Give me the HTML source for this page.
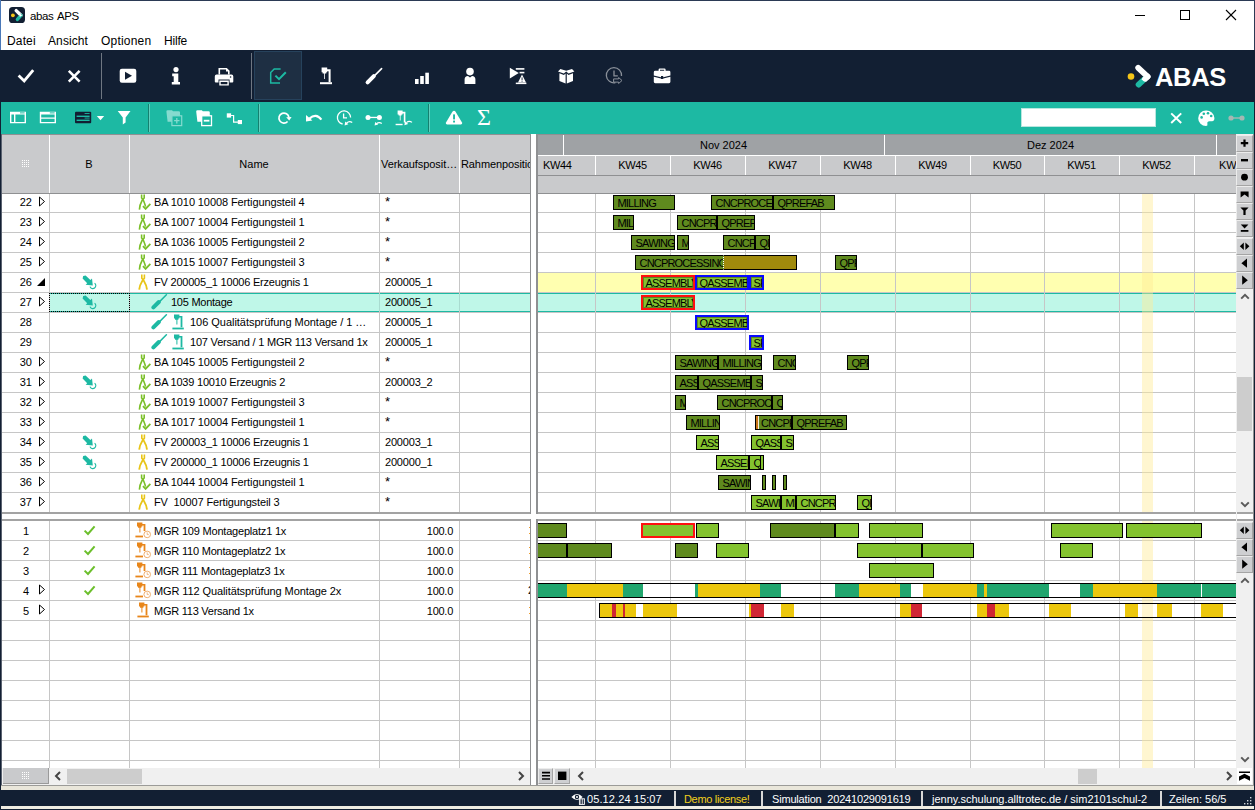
<!DOCTYPE html>
<html lang="de"><head><meta charset="utf-8"><title>abas APS</title>
<style>
html,body{margin:0;padding:0;}
body{width:1255px;height:810px;overflow:hidden;background:#fff;font-family:"Liberation Sans", sans-serif;font-size:11px;color:#000;position:relative;}
div,span,svg{position:absolute;box-sizing:border-box;}
.t{white-space:nowrap;line-height:14px;height:14px;font-size:11px;}
.bar{border:1px solid #000;overflow:hidden;white-space:nowrap;font-size:11px;line-height:14px;padding-left:3px;height:15px;color:#000;letter-spacing:-0.8px;}
.hl{height:1px;background:#c6c6c6;}
.vl{width:1px;background:#c6c6c6;}
.btn{width:17px;height:17px;background:#cecfd1;border-top:1px solid #ececec;border-left:1px solid #ececec;border-right:1px solid #a4a4a4;border-bottom:1px solid #a4a4a4;}

</style></head><body>
<div class="t" style="left:30px;top:8px;font-size:11.5px;letter-spacing:-0.4px;word-spacing:1.5px;line-height:16px;height:16px;">abas APS</div>
<svg style="left:9px;top:7px;" width="16" height="16" viewBox="0 0 16 16"><rect x="0" y="0" width="16" height="16" rx="3.6" fill="#121f33"/><circle cx="3.9" cy="8.3" r="1.9" fill="#f5c518"/><path d="M7.2 3.6 L12 8.3" stroke="#fff" stroke-width="3.4" stroke-linecap="round" fill="none"/><path d="M12 8.3 L8.4 12.4" stroke="#1db9a3" stroke-width="3.4" stroke-linecap="round" fill="none"/><path d="M9.6 5.9 L13.4 8.3 L10.8 10 Z" fill="#fff"/></svg>
<svg style="left:1130px;top:5px;" width="120" height="22" viewBox="0 0 120 22"><g stroke="#000" stroke-width="1" fill="none" shape-rendering="crispEdges"><line x1="5" y1="10.5" x2="15" y2="10.5"/><rect x="50.5" y="5.5" width="9" height="9"/></g><g stroke="#000" stroke-width="1.1" fill="none"><line x1="96" y1="5" x2="106" y2="15"/><line x1="106" y1="5" x2="96" y2="15"/></g></svg>
<div class="t" style="left:7px;top:33px;font-size:12px;line-height:16px;height:16px;letter-spacing:0.15px;">Datei</div>
<div class="t" style="left:48px;top:33px;font-size:12px;line-height:16px;height:16px;letter-spacing:0.1px;">Ansicht</div>
<div class="t" style="left:101px;top:33px;font-size:12px;line-height:16px;height:16px;letter-spacing:0.2px;">Optionen</div>
<div class="t" style="left:164px;top:33px;font-size:12px;line-height:16px;height:16px;letter-spacing:-0.2px;">Hilfe</div>
<div style="left:0px;top:50px;width:1255px;height:52px;background:#121f33;"></div>
<div style="left:0px;top:102px;width:1255px;height:32px;background:#1db9a3;"></div>
<svg style="left:0;top:50px" width="1255" height="51" viewBox="0 50 1255 51"><path d="M18.6 75.6 L24.2 81 L33.2 70.2" fill="none" stroke="#fff" stroke-width="2.8" stroke-linecap="butt" stroke-linejoin="miter"/><path d="M68.8 70.8 L79.6 81.6 M79.6 70.8 L68.8 81.6" fill="none" stroke="#fff" stroke-width="2.6"/><rect x="101" y="53" width="1" height="46" fill="#6f7782"/><rect x="119.7" y="68.8" width="16.6" height="14" rx="2.2" fill="#fff"/><path d="M125 71.8 L132 75.8 L125 79.8 Z" fill="#121f33"/><circle cx="176" cy="69.6" r="2.6" fill="#fff"/><path d="M172.2 73.6 H178.3 V82 H180 V84.6 H171.8 V82 H173.7 V76.2 H172.2 Z" fill="#fff"/><path d="M218.5 74.5 V68 H226.8 L229.6 70.8 V74.5 H228 V71.6 H226 V69.6 H220.1 V74.5 Z" fill="#fff"/><path d="M216.6 74.6 H231.5 Q233.3 74.6 233.3 76.4 V81.4 Q233.3 82.4 232.3 82.4 H229.6 V79.6 H218.5 V82.4 H215.8 Q214.8 82.4 214.8 81.4 V76.4 Q214.8 74.6 216.6 74.6 Z" fill="#fff"/><path d="M219.3 80.6 H228.8 V85.6 H219.3 Z M220.7 82 V84.2 H227.4 V82 Z" fill="#fff" fill-rule="evenodd"/><circle cx="230.6" cy="77" r="0.8" fill="#121f33"/><rect x="251" y="53" width="1" height="46" fill="#6f7782"/><rect x="254.5" y="51.5" width="47" height="48" fill="#1e2f43" stroke="#26425c" stroke-width="1"/><path d="M280.6 68.9 H274.2 L270.7 72.6 V83 H280" fill="none" stroke="#1db9a3" stroke-width="1.5"/><path d="M275.4 75.6 L279 79.2 L285.8 72.2" fill="none" stroke="#1db9a3" stroke-width="2"/><path d="M321.6 67.6 H327.2 V69.2 H330.6 V82 H328.6 V71.2 H327.2 V72.2 H326.3 V73.6 H325 V79 H324.2 V73.6 H322.6 V72.2 H321.6 Z" fill="#fff"/><rect x="320" y="82.2" width="12" height="2" fill="#fff"/><path d="M381.6 68.6 L373.6 76.6" stroke="#fff" stroke-width="1.6" stroke-linecap="round" fill="none"/><path d="M373.8 76.2 L367.6 82.4" stroke="#fff" stroke-width="4" stroke-linecap="round" fill="none"/><rect x="415" y="79" width="3.6" height="5" fill="#fff"/><rect x="420.2" y="76" width="3.6" height="8" fill="#fff"/><rect x="425.3" y="72.7" width="3.6" height="11.3" fill="#fff"/><circle cx="470" cy="71.6" r="3.8" fill="#fff"/><path d="M464.6 84 V79.6 Q464.6 76.2 468 76 L470 77.6 L472 76 Q475.4 76.2 475.4 79.6 V84 Z" fill="#fff"/><path d="M509.8 67.8 L518.8 73.1 L509.8 78.4 Z" fill="#fff"/><rect x="515.8" y="68.1" width="8.6" height="1.6" fill="#fff"/><rect x="519.6" y="71.8" width="4.8" height="1.6" fill="#fff"/><path d="M522 74.6 L526 82.6 H518 Z" fill="#fff"/><rect x="515.8" y="82.6" width="10.6" height="1.5" fill="#fff"/><rect x="521.6" y="77.4" width="0.9" height="2.8" fill="#121f33"/><rect x="521.6" y="80.8" width="0.9" height="0.9" fill="#121f33"/><path d="M558 71.4 L560.4 69 L566.2 70.8 L572 69 L574.4 71.4 L568.6 73.6 L566.2 71.6 L563.8 73.6 Z" fill="#fff"/><path d="M559.4 73.2 L563.9 74.9 L565.6 73.4 V83.4 L559.4 81 Z" fill="#fff"/><path d="M573 73.2 L568.5 74.9 L566.8 73.4 V83.4 L573 81 Z" fill="#fff"/><path d="M615.4 82.7 A7.6 7.6 0 1 1 621.5 76" fill="none" stroke="#8a9099" stroke-width="1.3"/><path d="M614 70.6 V75.8 H617.8" fill="none" stroke="#8a9099" stroke-width="1.3"/><path d="M613.6 78.9 H618.6 V77.5 L622 80.5 L618.6 83.5 V82.1 H613.6 Z" fill="none" stroke="#8a9099" stroke-width="1"/><path d="M658.6 71 V69.6 Q658.6 68.4 659.8 68.4 H664.4 Q665.6 68.4 665.6 69.6 V71 H664.2 V69.8 H660 V71 Z" fill="#fff"/><path d="M655.2 70.8 H669 Q670.4 70.8 670.4 72.2 V75.6 L663.2 77.2 V76 H661 V77.2 L653.8 75.6 V72.2 Q653.8 70.8 655.2 70.8 Z" fill="#fff"/><path d="M653.8 76.8 L661 78.4 V79 H663.2 V78.4 L670.4 76.8 V81.8 Q670.4 83.2 669 83.2 H655.2 Q653.8 83.2 653.8 81.8 Z" fill="#fff"/><circle cx="1131" cy="76.5" r="3.3" fill="#f5c518"/><path d="M1138.2 67.8 L1147.6 76.6" fill="none" stroke="#fff" stroke-width="5.8" stroke-linecap="round"/><path d="M1138.6 84.6 L1144.2 79.4" fill="none" stroke="#1db9a3" stroke-width="5.8" stroke-linecap="round"/><path d="M1147.6 76.6 L1145.2 78.8" fill="none" stroke="#fff" stroke-width="5.8" stroke-linecap="round"/><path d="M1144.6 75.2 L1149.8 76.4 L1146.6 80.6 L1141.4 80 Z" fill="#fff"/></svg>
<div class="t" style="left:1155px;top:63px;font-size:25.5px;font-weight:bold;color:#fff;line-height:28px;height:28px;letter-spacing:-0.3px;">ABAS</div>
<svg style="left:0;top:101px" width="1255" height="33" viewBox="0 101 1255 33"><path d="M10 111.7 H26 V123.3 H10 Z M11.4 114.4 V121.9 H14 V114.4 Z M15.4 114.4 V121.9 H24.6 V114.4 Z" fill="#fff" fill-rule="evenodd"/><rect x="20" y="112.4" width="4.6" height="1" fill="#1db9a3"/><path d="M39.8 111.7 H56 V123.3 H39.8 Z M41.2 114.4 V117.4 H54.6 V114.4 Z M41.2 118.8 V121.9 H54.6 V118.8 Z" fill="#fff" fill-rule="evenodd"/><rect x="49.8" y="112.4" width="4.8" height="1" fill="#1db9a3"/><rect x="75" y="111.7" width="16.2" height="11.6" rx="1" fill="#121f33"/><rect x="76.6" y="115.6" width="13" height="1.4" fill="#1db9a3"/><rect x="76.6" y="119.6" width="13" height="1.4" fill="#1db9a3"/><rect x="84.6" y="113" width="5" height="0.9" fill="#1db9a3"/><rect x="84.6" y="117.6" width="5" height="0.9" fill="#1db9a3"/><path d="M96.8 116 H104.2 L100.5 120.2 Z" fill="#fff"/><path d="M117.7 111 H130.5 L125.6 117.4 V122.6 L122.8 124.4 V117.4 Z" fill="#fff"/><rect x="148" y="104" width="1" height="28" fill="#15806f"/><rect x="149" y="104" width="1" height="28" fill="#5fd0bf"/><path d="M166.4 111.4 Q166.4 110.2 167.6 110.2 H172 L173 111.3 H178.8 Q180 111.3 180 112.5 V121.8 H167.6 Z" fill="#86dbcf"/><rect x="171.9" y="115.8" width="9.8" height="9.8" fill="#1db9a3" stroke="#86dbcf" stroke-width="1.2"/><path d="M176.8 118 V123.4 M174.1 120.7 H179.5" stroke="#86dbcf" stroke-width="1.3" fill="none"/><path d="M196.2 111.4 Q196.2 110.2 197.4 110.2 H201.8 L202.8 111.3 H208.6 Q209.8 111.3 209.8 112.5 V121.8 H197.4 Z" fill="#fff"/><rect x="201.7" y="115.8" width="9.8" height="9.8" fill="#1db9a3" stroke="#fff" stroke-width="1.3"/><path d="M203.8 120.7 H209.4" stroke="#fff" stroke-width="1.8" fill="none"/><rect x="226.8" y="113.3" width="4.3" height="4.3" fill="#fff"/><rect x="237.8" y="120" width="4.2" height="4.1" fill="#fff"/><path d="M231 115.5 H233.6 V122.2 H238" fill="none" stroke="#fff" stroke-width="1.2"/><rect x="258" y="104" width="1" height="28" fill="#15806f"/><rect x="259" y="104" width="1" height="28" fill="#5fd0bf"/><path d="M287.6 121.5 A5 5 0 1 1 288.9 117.4" fill="none" stroke="#fff" stroke-width="1.7"/><path d="M286.2 117.3 L291.6 117.1 L289.2 120.5 Z" fill="#fff"/><path d="M309.4 118.6 Q316 112.6 321.4 119.6" fill="none" stroke="#fff" stroke-width="2.1"/><path d="M306 115 V121.4 L312.4 120.6 Z" fill="#fff"/><path d="M342.6 124 A6.6 6.6 0 1 1 350.6 117.6" fill="none" stroke="#fff" stroke-width="1.3"/><path d="M343.6 113.4 V117.8 H347" fill="none" stroke="#fff" stroke-width="1.3"/><path d="M346.6 123 Q349.4 120.4 352.2 122.6" fill="none" stroke="#fff" stroke-width="1.3"/><path d="M344.6 125.4 L345.2 121.4 L348.4 124.2 Z" fill="#fff"/><circle cx="368" cy="117.4" r="2.5" fill="#fff"/><circle cx="379.4" cy="117.4" r="2.5" fill="#fff"/><rect x="368" y="116.8" width="11" height="1.3" fill="#fff"/><path d="M376.4 123.8 Q379 121.6 381.8 123.4" fill="none" stroke="#fff" stroke-width="1.2"/><path d="M374.6 125.6 L375.2 122 L378.2 124.4 Z" fill="#fff"/><path d="M397.6 110.4 H402.6 V111.8 H405.4 V122.4 H403.8 V113.4 H402.6 V114.4 H401.6 V115.4 H400.6 V120.4 H399.8 V115.4 H398.6 V114.4 H397.6 Z" fill="#fff"/><rect x="395.6" y="123.8" width="7" height="1.4" fill="#fff"/><path d="M406.4 122.6 Q409.2 120.2 412 122.4" fill="none" stroke="#fff" stroke-width="1.2"/><path d="M404.4 125.2 L405 121.2 L408.2 124 Z" fill="#fff"/><rect x="428" y="104" width="1" height="28" fill="#15806f"/><rect x="429" y="104" width="1" height="28" fill="#5fd0bf"/><path d="M454 110.8 Q455 110.8 455.6 111.8 L462 122.6 Q462.8 124.4 461 124.4 H447 Q445.2 124.4 446 122.6 L452.4 111.8 Q453 110.8 454 110.8 Z" fill="#fff"/><rect x="453.1" y="114.4" width="1.9" height="5" fill="#1db9a3"/><rect x="453.1" y="120.6" width="1.9" height="1.9" fill="#1db9a3"/><rect x="1021.5" y="108.5" width="134" height="18" fill="#fff" stroke="#b9e6df" stroke-width="1"/><path d="M1171.2 113.4 L1181.2 123 M1181.2 113.4 L1171.2 123" stroke="#fff" stroke-width="2" fill="none"/><path d="M1206 110.4 A7.8 7.8 0 1 0 1206 126 Q1208 126 1207.4 123.8 Q1206.8 121.4 1209.6 121.2 H1212 Q1214.6 121 1214.4 118 A8 8 0 0 0 1206 110.4 Z" fill="#fff"/><circle cx="1201.6" cy="117.4" r="1.3" fill="#1db9a3"/><circle cx="1203.8" cy="113.8" r="1.3" fill="#1db9a3"/><circle cx="1208" cy="113.2" r="1.3" fill="#1db9a3"/><circle cx="1211.2" cy="116" r="1.3" fill="#1db9a3"/><circle cx="1231" cy="118" r="2.6" fill="#a4b8b3"/><circle cx="1242" cy="118" r="2.6" fill="#a4b8b3"/><rect x="1231" y="117.3" width="11" height="1.4" fill="#a4b8b3"/></svg>
<div class="t" style="left:477px;top:104px;font-family:'Liberation Serif',serif;font-size:24px;line-height:26px;height:26px;color:#fff;">&Sigma;</div>
<div style="left:2px;top:134px;width:529px;height:60px;background:#c9cacc;"></div>
<div style="left:2px;top:134px;width:529px;height:1px;background:#8f9092;"></div>
<div style="left:2px;top:193px;width:529px;height:1px;background:#8f9092;"></div>
<div style="left:49px;top:135px;width:1px;height:58px;background:#fff;"></div>
<div style="left:129px;top:135px;width:1px;height:58px;background:#fff;"></div>
<div style="left:379px;top:135px;width:1px;height:58px;background:#fff;"></div>
<div style="left:459px;top:135px;width:1px;height:58px;background:#fff;"></div>
<svg style="left:22px;top:160px;" width="8" height="8" viewBox="0 0 8 8"><rect x="0" y="0" width="1" height="1" fill="#fff"/><rect x="0" y="2" width="1" height="1" fill="#fff"/><rect x="0" y="4" width="1" height="1" fill="#fff"/><rect x="0" y="6" width="1" height="1" fill="#fff"/><rect x="2" y="0" width="1" height="1" fill="#fff"/><rect x="2" y="2" width="1" height="1" fill="#fff"/><rect x="2" y="4" width="1" height="1" fill="#fff"/><rect x="2" y="6" width="1" height="1" fill="#fff"/><rect x="4" y="0" width="1" height="1" fill="#fff"/><rect x="4" y="2" width="1" height="1" fill="#fff"/><rect x="4" y="4" width="1" height="1" fill="#fff"/><rect x="4" y="6" width="1" height="1" fill="#fff"/><rect x="6" y="0" width="1" height="1" fill="#fff"/><rect x="6" y="2" width="1" height="1" fill="#fff"/><rect x="6" y="4" width="1" height="1" fill="#fff"/><rect x="6" y="6" width="1" height="1" fill="#fff"/></svg>
<div class="t" style="left:49px;top:157px;width:80px;text-align:center;">B</div>
<div class="t" style="left:129px;top:157px;width:250px;text-align:center;">Name</div>
<div class="t" style="left:381px;top:157px;letter-spacing:-0.07px;">Verkaufsposit&hellip;</div>
<div style="left:461px;top:157px;width:69px;height:14px;overflow:hidden;"><div class="t" style="left:0;top:0;letter-spacing:-0.1px;">Rahmenposition</div></div>
<div style="left:2px;top:194px;width:529px;height:319px;background:#fff;"></div>
<div style="left:50px;top:293px;width:481px;height:19px;background:#bff7e8;border-top:1px solid #1db9a3;border-bottom:1px solid #1db9a3;"></div>
<div style="left:2px;top:212px;width:529px;height:1px;background:#c6c6c6;"></div>
<div style="left:2px;top:232px;width:529px;height:1px;background:#c6c6c6;"></div>
<div style="left:2px;top:252px;width:529px;height:1px;background:#c6c6c6;"></div>
<div style="left:2px;top:272px;width:529px;height:1px;background:#c6c6c6;"></div>
<div style="left:2px;top:292px;width:529px;height:1px;background:#c6c6c6;"></div>
<div style="left:2px;top:312px;width:529px;height:1px;background:#c6c6c6;"></div>
<div style="left:2px;top:332px;width:529px;height:1px;background:#c6c6c6;"></div>
<div style="left:2px;top:352px;width:529px;height:1px;background:#c6c6c6;"></div>
<div style="left:2px;top:372px;width:529px;height:1px;background:#c6c6c6;"></div>
<div style="left:2px;top:392px;width:529px;height:1px;background:#c6c6c6;"></div>
<div style="left:2px;top:412px;width:529px;height:1px;background:#c6c6c6;"></div>
<div style="left:2px;top:432px;width:529px;height:1px;background:#c6c6c6;"></div>
<div style="left:2px;top:452px;width:529px;height:1px;background:#c6c6c6;"></div>
<div style="left:2px;top:472px;width:529px;height:1px;background:#c6c6c6;"></div>
<div style="left:2px;top:492px;width:529px;height:1px;background:#c6c6c6;"></div>
<div style="left:2px;top:512px;width:529px;height:1px;background:#c6c6c6;"></div>
<div style="left:49px;top:194px;width:1px;height:319px;background:#c6c6c6;"></div>
<div style="left:129px;top:194px;width:1px;height:319px;background:#c6c6c6;"></div>
<div style="left:379px;top:194px;width:1px;height:319px;background:#c6c6c6;"></div>
<div style="left:459px;top:194px;width:1px;height:319px;background:#c6c6c6;"></div>
<div style="left:379px;top:294px;width:1px;height:17px;background:#a9dcd0;"></div>
<div style="left:459px;top:294px;width:1px;height:17px;background:#a9dcd0;"></div>
<div style="left:49px;top:293px;width:81px;height:19px;border:1px dotted #000;"></div>
<div class="t" style="left:2px;top:195px;width:30px;text-align:right;">22</div>
<svg style="left:38px;top:196px;" width="8" height="12" viewBox="0 0 8 12"><path d="M1.5 1 L6.5 5.5 L1.5 10 Z" fill="#fff" stroke="#000" stroke-width="1"/></svg>
<svg style="left:138px;top:194px;" width="13" height="16" viewBox="0 0 13 16"><path d="M3.6 0.4 V4 L4.9 5.4 L6.2 4 V0.4" fill="none" stroke="#7bbf2a" stroke-width="1.6" stroke-linejoin="round"/><path d="M4.9 5 C3.6 7.5 1.6 10 1.4 15.6 M4.9 5 C5.8 7.5 6.8 9.5 7.6 12.6" fill="none" stroke="#7bbf2a" stroke-width="1.6"/><path d="M5 12.2 L7.6 14.8 L12.4 9.8" fill="none" stroke="#7bbf2a" stroke-width="1.9"/></svg>
<div class="t" style="left:154px;top:195px;letter-spacing:-0.1px;">BA 1010 10008 Fertigungsteil 4</div>
<div class="t" style="left:385px;top:195px;font-size:13px;">*</div>
<div class="t" style="left:2px;top:215px;width:30px;text-align:right;">23</div>
<svg style="left:38px;top:216px;" width="8" height="12" viewBox="0 0 8 12"><path d="M1.5 1 L6.5 5.5 L1.5 10 Z" fill="#fff" stroke="#000" stroke-width="1"/></svg>
<svg style="left:138px;top:214px;" width="13" height="16" viewBox="0 0 13 16"><path d="M3.6 0.4 V4 L4.9 5.4 L6.2 4 V0.4" fill="none" stroke="#7bbf2a" stroke-width="1.6" stroke-linejoin="round"/><path d="M4.9 5 C3.6 7.5 1.6 10 1.4 15.6 M4.9 5 C5.8 7.5 6.8 9.5 7.6 12.6" fill="none" stroke="#7bbf2a" stroke-width="1.6"/><path d="M5 12.2 L7.6 14.8 L12.4 9.8" fill="none" stroke="#7bbf2a" stroke-width="1.9"/></svg>
<div class="t" style="left:154px;top:215px;letter-spacing:-0.1px;">BA 1007 10004 Fertigungsteil 1</div>
<div class="t" style="left:385px;top:215px;font-size:13px;">*</div>
<div class="t" style="left:2px;top:235px;width:30px;text-align:right;">24</div>
<svg style="left:38px;top:236px;" width="8" height="12" viewBox="0 0 8 12"><path d="M1.5 1 L6.5 5.5 L1.5 10 Z" fill="#fff" stroke="#000" stroke-width="1"/></svg>
<svg style="left:138px;top:234px;" width="13" height="16" viewBox="0 0 13 16"><path d="M3.6 0.4 V4 L4.9 5.4 L6.2 4 V0.4" fill="none" stroke="#7bbf2a" stroke-width="1.6" stroke-linejoin="round"/><path d="M4.9 5 C3.6 7.5 1.6 10 1.4 15.6 M4.9 5 C5.8 7.5 6.8 9.5 7.6 12.6" fill="none" stroke="#7bbf2a" stroke-width="1.6"/><path d="M5 12.2 L7.6 14.8 L12.4 9.8" fill="none" stroke="#7bbf2a" stroke-width="1.9"/></svg>
<div class="t" style="left:154px;top:235px;letter-spacing:-0.1px;">BA 1036 10005 Fertigungsteil 2</div>
<div class="t" style="left:385px;top:235px;font-size:13px;">*</div>
<div class="t" style="left:2px;top:255px;width:30px;text-align:right;">25</div>
<svg style="left:38px;top:256px;" width="8" height="12" viewBox="0 0 8 12"><path d="M1.5 1 L6.5 5.5 L1.5 10 Z" fill="#fff" stroke="#000" stroke-width="1"/></svg>
<svg style="left:138px;top:254px;" width="13" height="16" viewBox="0 0 13 16"><path d="M3.6 0.4 V4 L4.9 5.4 L6.2 4 V0.4" fill="none" stroke="#7bbf2a" stroke-width="1.6" stroke-linejoin="round"/><path d="M4.9 5 C3.6 7.5 1.6 10 1.4 15.6 M4.9 5 C5.8 7.5 6.8 9.5 7.6 12.6" fill="none" stroke="#7bbf2a" stroke-width="1.6"/><path d="M5 12.2 L7.6 14.8 L12.4 9.8" fill="none" stroke="#7bbf2a" stroke-width="1.9"/></svg>
<div class="t" style="left:154px;top:255px;letter-spacing:-0.1px;">BA 1015 10007 Fertigungsteil 3</div>
<div class="t" style="left:385px;top:255px;font-size:13px;">*</div>
<div class="t" style="left:2px;top:275px;width:30px;text-align:right;">26</div>
<svg style="left:37px;top:278px;" width="9" height="9" viewBox="0 0 9 9"><path d="M8 0 V8 H0 Z" fill="#000"/></svg>
<svg style="left:82px;top:275px;" width="15" height="15" viewBox="0 0 15 15"><path d="M1.2 1 L3.6 0.4 L8.4 5 L10 3.4 L10.8 10.6 L3.6 9.8 L5.2 8.2 L0.6 3.4 Z" fill="#1db9a3"/><path d="M12.6 8.2 A3 3 0 1 1 8 11.6" fill="none" stroke="#1db9a3" stroke-width="1.1"/></svg>
<svg style="left:138px;top:274px;" width="13" height="16" viewBox="0 0 13 16"><path d="M3.8 0.4 V4.2 L5.1 5.8 L6.4 4.2 V0.4" fill="none" stroke="#e8c519" stroke-width="1.6" stroke-linejoin="round"/><path d="M5.1 5.6 C3.4 8.6 1.4 11 1.2 15.6 M5.1 5.6 C6.8 8.6 8.8 11 9 15.6" fill="none" stroke="#e8c519" stroke-width="1.9"/></svg>
<div class="t" style="left:154px;top:275px;letter-spacing:-0.21px;">FV 200005_1 10006 Erzeugnis 1</div>
<div class="t" style="left:385px;top:275px;letter-spacing:-0.19px;">200005_1</div>
<div class="t" style="left:2px;top:295px;width:30px;text-align:right;">27</div>
<svg style="left:38px;top:296px;" width="8" height="12" viewBox="0 0 8 12"><path d="M1.5 1 L6.5 5.5 L1.5 10 Z" fill="#fff" stroke="#000" stroke-width="1"/></svg>
<svg style="left:82px;top:295px;" width="15" height="15" viewBox="0 0 15 15"><path d="M1.2 1 L3.6 0.4 L8.4 5 L10 3.4 L10.8 10.6 L3.6 9.8 L5.2 8.2 L0.6 3.4 Z" fill="#1db9a3"/><path d="M12.6 8.2 A3 3 0 1 1 8 11.6" fill="none" stroke="#1db9a3" stroke-width="1.1"/></svg>
<svg style="left:151px;top:294px;" width="17" height="16" viewBox="0 0 17 16"><path d="M15.4 0.8 L7.6 8.6" stroke="#1db9a3" stroke-width="1.5" stroke-linecap="round" fill="none"/><path d="M7.8 8 L2.4 13.4" stroke="#1db9a3" stroke-width="4" stroke-linecap="round" fill="none"/></svg>
<div class="t" style="left:171px;top:295px;letter-spacing:-0.25px;">105 Montage</div>
<div class="t" style="left:385px;top:295px;letter-spacing:-0.19px;">200005_1</div>
<div class="t" style="left:2px;top:315px;width:30px;text-align:right;">28</div>
<svg style="left:151px;top:314px;" width="17" height="16" viewBox="0 0 17 16"><path d="M15.4 0.8 L7.6 8.6" stroke="#1db9a3" stroke-width="1.5" stroke-linecap="round" fill="none"/><path d="M7.8 8 L2.4 13.4" stroke="#1db9a3" stroke-width="4" stroke-linecap="round" fill="none"/></svg>
<svg style="left:172px;top:314px;" width="17" height="17" viewBox="0 0 17 17"><path d="M2 0.4 H7.4 V2 H10.4 V13.2 H8.6 V3.6 H7.4 V4.6 H6.4 V5.8 H5.4 V10.6 H4.4 V5.8 H3 V4.6 H2 Z" fill="#1db9a3"/><rect x="0.4" y="13.6" width="11.4" height="1.8" fill="#1db9a3"/></svg>
<div class="t" style="left:190px;top:315px;letter-spacing:-0.03px;">106 Qualitätsprüfung Montage / 1 &hellip;</div>
<div class="t" style="left:385px;top:315px;letter-spacing:-0.19px;">200005_1</div>
<div class="t" style="left:2px;top:335px;width:30px;text-align:right;">29</div>
<svg style="left:151px;top:334px;" width="17" height="16" viewBox="0 0 17 16"><path d="M15.4 0.8 L7.6 8.6" stroke="#1db9a3" stroke-width="1.5" stroke-linecap="round" fill="none"/><path d="M7.8 8 L2.4 13.4" stroke="#1db9a3" stroke-width="4" stroke-linecap="round" fill="none"/></svg>
<svg style="left:172px;top:334px;" width="17" height="17" viewBox="0 0 17 17"><path d="M2 0.4 H7.4 V2 H10.4 V13.2 H8.6 V3.6 H7.4 V4.6 H6.4 V5.8 H5.4 V10.6 H4.4 V5.8 H3 V4.6 H2 Z" fill="#1db9a3"/><rect x="0.4" y="13.6" width="11.4" height="1.8" fill="#1db9a3"/></svg>
<div class="t" style="left:190px;top:335px;letter-spacing:-0.2px;">107 Versand / 1 MGR 113 Versand 1x</div>
<div class="t" style="left:385px;top:335px;letter-spacing:-0.19px;">200005_1</div>
<div class="t" style="left:2px;top:355px;width:30px;text-align:right;">30</div>
<svg style="left:38px;top:356px;" width="8" height="12" viewBox="0 0 8 12"><path d="M1.5 1 L6.5 5.5 L1.5 10 Z" fill="#fff" stroke="#000" stroke-width="1"/></svg>
<svg style="left:138px;top:354px;" width="13" height="16" viewBox="0 0 13 16"><path d="M3.6 0.4 V4 L4.9 5.4 L6.2 4 V0.4" fill="none" stroke="#7bbf2a" stroke-width="1.6" stroke-linejoin="round"/><path d="M4.9 5 C3.6 7.5 1.6 10 1.4 15.6 M4.9 5 C5.8 7.5 6.8 9.5 7.6 12.6" fill="none" stroke="#7bbf2a" stroke-width="1.6"/><path d="M5 12.2 L7.6 14.8 L12.4 9.8" fill="none" stroke="#7bbf2a" stroke-width="1.9"/></svg>
<div class="t" style="left:154px;top:355px;letter-spacing:-0.1px;">BA 1045 10005 Fertigungsteil 2</div>
<div class="t" style="left:385px;top:355px;font-size:13px;">*</div>
<div class="t" style="left:2px;top:375px;width:30px;text-align:right;">31</div>
<svg style="left:38px;top:376px;" width="8" height="12" viewBox="0 0 8 12"><path d="M1.5 1 L6.5 5.5 L1.5 10 Z" fill="#fff" stroke="#000" stroke-width="1"/></svg>
<svg style="left:82px;top:375px;" width="15" height="15" viewBox="0 0 15 15"><path d="M1.2 1 L3.6 0.4 L8.4 5 L10 3.4 L10.8 10.6 L3.6 9.8 L5.2 8.2 L0.6 3.4 Z" fill="#1db9a3"/><path d="M12.6 8.2 A3 3 0 1 1 8 11.6" fill="none" stroke="#1db9a3" stroke-width="1.1"/></svg>
<svg style="left:138px;top:374px;" width="13" height="16" viewBox="0 0 13 16"><path d="M3.6 0.4 V4 L4.9 5.4 L6.2 4 V0.4" fill="none" stroke="#7bbf2a" stroke-width="1.6" stroke-linejoin="round"/><path d="M4.9 5 C3.6 7.5 1.6 10 1.4 15.6 M4.9 5 C5.8 7.5 6.8 9.5 7.6 12.6" fill="none" stroke="#7bbf2a" stroke-width="1.6"/><path d="M5 12.2 L7.6 14.8 L12.4 9.8" fill="none" stroke="#7bbf2a" stroke-width="1.9"/></svg>
<div class="t" style="left:154px;top:375px;letter-spacing:-0.21px;">BA 1039 10010 Erzeugnis 2</div>
<div class="t" style="left:385px;top:375px;letter-spacing:-0.19px;">200003_2</div>
<div class="t" style="left:2px;top:395px;width:30px;text-align:right;">32</div>
<svg style="left:38px;top:396px;" width="8" height="12" viewBox="0 0 8 12"><path d="M1.5 1 L6.5 5.5 L1.5 10 Z" fill="#fff" stroke="#000" stroke-width="1"/></svg>
<svg style="left:138px;top:394px;" width="13" height="16" viewBox="0 0 13 16"><path d="M3.6 0.4 V4 L4.9 5.4 L6.2 4 V0.4" fill="none" stroke="#7bbf2a" stroke-width="1.6" stroke-linejoin="round"/><path d="M4.9 5 C3.6 7.5 1.6 10 1.4 15.6 M4.9 5 C5.8 7.5 6.8 9.5 7.6 12.6" fill="none" stroke="#7bbf2a" stroke-width="1.6"/><path d="M5 12.2 L7.6 14.8 L12.4 9.8" fill="none" stroke="#7bbf2a" stroke-width="1.9"/></svg>
<div class="t" style="left:154px;top:395px;letter-spacing:-0.1px;">BA 1019 10007 Fertigungsteil 3</div>
<div class="t" style="left:385px;top:395px;font-size:13px;">*</div>
<div class="t" style="left:2px;top:415px;width:30px;text-align:right;">33</div>
<svg style="left:38px;top:416px;" width="8" height="12" viewBox="0 0 8 12"><path d="M1.5 1 L6.5 5.5 L1.5 10 Z" fill="#fff" stroke="#000" stroke-width="1"/></svg>
<svg style="left:138px;top:414px;" width="13" height="16" viewBox="0 0 13 16"><path d="M3.6 0.4 V4 L4.9 5.4 L6.2 4 V0.4" fill="none" stroke="#7bbf2a" stroke-width="1.6" stroke-linejoin="round"/><path d="M4.9 5 C3.6 7.5 1.6 10 1.4 15.6 M4.9 5 C5.8 7.5 6.8 9.5 7.6 12.6" fill="none" stroke="#7bbf2a" stroke-width="1.6"/><path d="M5 12.2 L7.6 14.8 L12.4 9.8" fill="none" stroke="#7bbf2a" stroke-width="1.9"/></svg>
<div class="t" style="left:154px;top:415px;letter-spacing:-0.1px;">BA 1017 10004 Fertigungsteil 1</div>
<div class="t" style="left:385px;top:415px;font-size:13px;">*</div>
<div class="t" style="left:2px;top:435px;width:30px;text-align:right;">34</div>
<svg style="left:38px;top:436px;" width="8" height="12" viewBox="0 0 8 12"><path d="M1.5 1 L6.5 5.5 L1.5 10 Z" fill="#fff" stroke="#000" stroke-width="1"/></svg>
<svg style="left:82px;top:435px;" width="15" height="15" viewBox="0 0 15 15"><path d="M1.2 1 L3.6 0.4 L8.4 5 L10 3.4 L10.8 10.6 L3.6 9.8 L5.2 8.2 L0.6 3.4 Z" fill="#1db9a3"/><path d="M12.6 8.2 A3 3 0 1 1 8 11.6" fill="none" stroke="#1db9a3" stroke-width="1.1"/></svg>
<svg style="left:138px;top:434px;" width="13" height="16" viewBox="0 0 13 16"><path d="M3.8 0.4 V4.2 L5.1 5.8 L6.4 4.2 V0.4" fill="none" stroke="#e8c519" stroke-width="1.6" stroke-linejoin="round"/><path d="M5.1 5.6 C3.4 8.6 1.4 11 1.2 15.6 M5.1 5.6 C6.8 8.6 8.8 11 9 15.6" fill="none" stroke="#e8c519" stroke-width="1.9"/></svg>
<div class="t" style="left:154px;top:435px;letter-spacing:-0.21px;">FV 200003_1 10006 Erzeugnis 1</div>
<div class="t" style="left:385px;top:435px;letter-spacing:-0.19px;">200003_1</div>
<div class="t" style="left:2px;top:455px;width:30px;text-align:right;">35</div>
<svg style="left:38px;top:456px;" width="8" height="12" viewBox="0 0 8 12"><path d="M1.5 1 L6.5 5.5 L1.5 10 Z" fill="#fff" stroke="#000" stroke-width="1"/></svg>
<svg style="left:82px;top:455px;" width="15" height="15" viewBox="0 0 15 15"><path d="M1.2 1 L3.6 0.4 L8.4 5 L10 3.4 L10.8 10.6 L3.6 9.8 L5.2 8.2 L0.6 3.4 Z" fill="#1db9a3"/><path d="M12.6 8.2 A3 3 0 1 1 8 11.6" fill="none" stroke="#1db9a3" stroke-width="1.1"/></svg>
<svg style="left:138px;top:454px;" width="13" height="16" viewBox="0 0 13 16"><path d="M3.8 0.4 V4.2 L5.1 5.8 L6.4 4.2 V0.4" fill="none" stroke="#e8c519" stroke-width="1.6" stroke-linejoin="round"/><path d="M5.1 5.6 C3.4 8.6 1.4 11 1.2 15.6 M5.1 5.6 C6.8 8.6 8.8 11 9 15.6" fill="none" stroke="#e8c519" stroke-width="1.9"/></svg>
<div class="t" style="left:154px;top:455px;letter-spacing:-0.21px;">FV 200000_1 10006 Erzeugnis 1</div>
<div class="t" style="left:385px;top:455px;letter-spacing:-0.19px;">200000_1</div>
<div class="t" style="left:2px;top:475px;width:30px;text-align:right;">36</div>
<svg style="left:38px;top:476px;" width="8" height="12" viewBox="0 0 8 12"><path d="M1.5 1 L6.5 5.5 L1.5 10 Z" fill="#fff" stroke="#000" stroke-width="1"/></svg>
<svg style="left:138px;top:474px;" width="13" height="16" viewBox="0 0 13 16"><path d="M3.6 0.4 V4 L4.9 5.4 L6.2 4 V0.4" fill="none" stroke="#7bbf2a" stroke-width="1.6" stroke-linejoin="round"/><path d="M4.9 5 C3.6 7.5 1.6 10 1.4 15.6 M4.9 5 C5.8 7.5 6.8 9.5 7.6 12.6" fill="none" stroke="#7bbf2a" stroke-width="1.6"/><path d="M5 12.2 L7.6 14.8 L12.4 9.8" fill="none" stroke="#7bbf2a" stroke-width="1.9"/></svg>
<div class="t" style="left:154px;top:475px;letter-spacing:-0.1px;">BA 1044 10004 Fertigungsteil 1</div>
<div class="t" style="left:385px;top:475px;font-size:13px;">*</div>
<div class="t" style="left:2px;top:495px;width:30px;text-align:right;">37</div>
<svg style="left:38px;top:496px;" width="8" height="12" viewBox="0 0 8 12"><path d="M1.5 1 L6.5 5.5 L1.5 10 Z" fill="#fff" stroke="#000" stroke-width="1"/></svg>
<svg style="left:138px;top:494px;" width="13" height="16" viewBox="0 0 13 16"><path d="M3.8 0.4 V4.2 L5.1 5.8 L6.4 4.2 V0.4" fill="none" stroke="#e8c519" stroke-width="1.6" stroke-linejoin="round"/><path d="M5.1 5.6 C3.4 8.6 1.4 11 1.2 15.6 M5.1 5.6 C6.8 8.6 8.8 11 9 15.6" fill="none" stroke="#e8c519" stroke-width="1.9"/></svg>
<div class="t" style="left:154px;top:495px;letter-spacing:-0.14px;">FV&nbsp; 10007 Fertigungsteil 3</div>
<div class="t" style="left:385px;top:495px;font-size:13px;">*</div>
<div style="left:2px;top:512px;width:529px;height:2px;background:#a3a3a3;"></div>
<div style="left:2px;top:519px;width:529px;height:2px;background:#a3a3a3;"></div>
<div style="left:2px;top:521px;width:529px;height:247px;background:#fff;"></div>
<div style="left:2px;top:540px;width:529px;height:1px;background:#c6c6c6;"></div>
<div style="left:2px;top:560px;width:529px;height:1px;background:#c6c6c6;"></div>
<div style="left:2px;top:580px;width:529px;height:1px;background:#c6c6c6;"></div>
<div style="left:2px;top:600px;width:529px;height:1px;background:#c6c6c6;"></div>
<div style="left:2px;top:620px;width:529px;height:1px;background:#c6c6c6;"></div>
<div style="left:2px;top:640px;width:529px;height:1px;background:#c6c6c6;"></div>
<div style="left:2px;top:660px;width:529px;height:1px;background:#c6c6c6;"></div>
<div style="left:2px;top:680px;width:529px;height:1px;background:#c6c6c6;"></div>
<div style="left:2px;top:700px;width:529px;height:1px;background:#c6c6c6;"></div>
<div style="left:2px;top:720px;width:529px;height:1px;background:#c6c6c6;"></div>
<div style="left:2px;top:740px;width:529px;height:1px;background:#c6c6c6;"></div>
<div style="left:2px;top:760px;width:529px;height:1px;background:#c6c6c6;"></div>
<div style="left:49px;top:521px;width:1px;height:247px;background:#c6c6c6;"></div>
<div style="left:129px;top:521px;width:1px;height:247px;background:#c6c6c6;"></div>
<div style="left:379px;top:521px;width:1px;height:247px;background:#c6c6c6;"></div>
<div style="left:459px;top:521px;width:1px;height:247px;background:#c6c6c6;"></div>
<div class="t" style="left:2px;top:524px;width:27px;text-align:right;">1</div>
<svg style="left:82px;top:524px;" width="14" height="12" viewBox="0 0 14 12"><path d="M2.6 6.6 L6 10 L12.6 2.4" fill="none" stroke="#6cbf2c" stroke-width="2"/></svg>
<svg style="left:135px;top:522px;" width="17" height="17" viewBox="0 0 17 17"><path d="M2 0.4 H7.4 V2 H10.4 V9 H8.6 V3.6 H7.4 V4.6 H6.4 V5.8 H5.4 V10.6 H4.4 V5.8 H3 V4.6 H2 Z" fill="#e8861a"/><rect x="0.4" y="13.6" width="7.6" height="1.8" fill="#e8861a"/><circle cx="12.2" cy="12.4" r="3.3" fill="#fff" stroke="#f0b070" stroke-width="1"/><path d="M12.2 10.4 V12.6 H13.8" fill="none" stroke="#f0b070" stroke-width="0.9"/></svg>
<div class="t" style="left:154px;top:524px;letter-spacing:-0.2px;">MGR 109 Montageplatz1 1x</div>
<div class="t" style="left:380px;top:524px;width:73px;text-align:right;letter-spacing:-0.27px;">100.0</div>
<div style="left:529px;top:527px;width:1px;height:1px;background:#f0a030;"></div>
<div style="left:529px;top:533px;width:1px;height:1px;background:#f0a030;"></div>
<div class="t" style="left:2px;top:544px;width:27px;text-align:right;">2</div>
<svg style="left:82px;top:544px;" width="14" height="12" viewBox="0 0 14 12"><path d="M2.6 6.6 L6 10 L12.6 2.4" fill="none" stroke="#6cbf2c" stroke-width="2"/></svg>
<svg style="left:135px;top:542px;" width="17" height="17" viewBox="0 0 17 17"><path d="M2 0.4 H7.4 V2 H10.4 V9 H8.6 V3.6 H7.4 V4.6 H6.4 V5.8 H5.4 V10.6 H4.4 V5.8 H3 V4.6 H2 Z" fill="#e8861a"/><rect x="0.4" y="13.6" width="7.6" height="1.8" fill="#e8861a"/><circle cx="12.2" cy="12.4" r="3.3" fill="#fff" stroke="#f0b070" stroke-width="1"/><path d="M12.2 10.4 V12.6 H13.8" fill="none" stroke="#f0b070" stroke-width="0.9"/></svg>
<div class="t" style="left:154px;top:544px;letter-spacing:-0.2px;">MGR 110 Montageplatz2 1x</div>
<div class="t" style="left:380px;top:544px;width:73px;text-align:right;letter-spacing:-0.27px;">100.0</div>
<div style="left:529px;top:547px;width:1px;height:1px;background:#f0a030;"></div>
<div style="left:529px;top:553px;width:1px;height:1px;background:#f0a030;"></div>
<div class="t" style="left:2px;top:564px;width:27px;text-align:right;">3</div>
<svg style="left:82px;top:564px;" width="14" height="12" viewBox="0 0 14 12"><path d="M2.6 6.6 L6 10 L12.6 2.4" fill="none" stroke="#6cbf2c" stroke-width="2"/></svg>
<svg style="left:135px;top:562px;" width="17" height="17" viewBox="0 0 17 17"><path d="M2 0.4 H7.4 V2 H10.4 V9 H8.6 V3.6 H7.4 V4.6 H6.4 V5.8 H5.4 V10.6 H4.4 V5.8 H3 V4.6 H2 Z" fill="#e8861a"/><rect x="0.4" y="13.6" width="7.6" height="1.8" fill="#e8861a"/><circle cx="12.2" cy="12.4" r="3.3" fill="#fff" stroke="#f0b070" stroke-width="1"/><path d="M12.2 10.4 V12.6 H13.8" fill="none" stroke="#f0b070" stroke-width="0.9"/></svg>
<div class="t" style="left:154px;top:564px;letter-spacing:-0.2px;">MGR 111 Montageplatz3 1x</div>
<div class="t" style="left:380px;top:564px;width:73px;text-align:right;letter-spacing:-0.27px;">100.0</div>
<div style="left:529px;top:567px;width:1px;height:1px;background:#f0a030;"></div>
<div style="left:529px;top:573px;width:1px;height:1px;background:#f0a030;"></div>
<div class="t" style="left:2px;top:584px;width:27px;text-align:right;">4</div>
<svg style="left:38px;top:584px;" width="8" height="12" viewBox="0 0 8 12"><path d="M1.5 1 L6.5 5.5 L1.5 10 Z" fill="#fff" stroke="#000" stroke-width="1"/></svg>
<svg style="left:82px;top:584px;" width="14" height="12" viewBox="0 0 14 12"><path d="M2.6 6.6 L6 10 L12.6 2.4" fill="none" stroke="#6cbf2c" stroke-width="2"/></svg>
<svg style="left:135px;top:582px;" width="17" height="17" viewBox="0 0 17 17"><path d="M2 0.4 H7.4 V2 H10.4 V9 H8.6 V3.6 H7.4 V4.6 H6.4 V5.8 H5.4 V10.6 H4.4 V5.8 H3 V4.6 H2 Z" fill="#e8861a"/><rect x="0.4" y="13.6" width="7.6" height="1.8" fill="#e8861a"/><circle cx="12.2" cy="12.4" r="3.3" fill="#fff" stroke="#f0b070" stroke-width="1"/><path d="M12.2 10.4 V12.6 H13.8" fill="none" stroke="#f0b070" stroke-width="0.9"/></svg>
<div class="t" style="left:154px;top:584px;letter-spacing:-0.1px;">MGR 112 Qualitätsprüfung Montage 2x</div>
<div class="t" style="left:380px;top:584px;width:73px;text-align:right;letter-spacing:-0.27px;">100.0</div>
<div style="left:527px;top:583px;width:4px;height:14px;overflow:hidden;"><div class="t" style="left:1px;top:0;">2</div></div>
<div class="t" style="left:2px;top:604px;width:27px;text-align:right;">5</div>
<svg style="left:38px;top:604px;" width="8" height="12" viewBox="0 0 8 12"><path d="M1.5 1 L6.5 5.5 L1.5 10 Z" fill="#fff" stroke="#000" stroke-width="1"/></svg>
<svg style="left:137px;top:602px;" width="17" height="17" viewBox="0 0 17 17"><path d="M2 0.4 H7.4 V2 H10.4 V13.2 H8.6 V3.6 H7.4 V4.6 H6.4 V5.8 H5.4 V10.6 H4.4 V5.8 H3 V4.6 H2 Z" fill="#e8861a"/><rect x="0.4" y="13.6" width="11.4" height="1.8" fill="#e8861a"/></svg>
<div class="t" style="left:154px;top:604px;letter-spacing:-0.25px;">MGR 113 Versand 1x</div>
<div class="t" style="left:380px;top:604px;width:73px;text-align:right;letter-spacing:-0.27px;">100.0</div>
<div style="left:529px;top:607px;width:1px;height:1px;background:#f0a030;"></div>
<div style="left:529px;top:613px;width:1px;height:1px;background:#f0a030;"></div>
<div style="left:2px;top:768px;width:529px;height:17px;background:#f0f0f0;"></div>
<div style="left:3px;top:768px;width:46px;height:16px;background:#c9cacc;border-right:1px solid #9a9a9a;border-bottom:1px solid #9a9a9a;"></div>
<svg style="left:22px;top:772px;" width="8" height="8" viewBox="0 0 8 8"><rect x="0" y="0" width="1" height="1" fill="#fff"/><rect x="0" y="2" width="1" height="1" fill="#fff"/><rect x="0" y="4" width="1" height="1" fill="#fff"/><rect x="0" y="6" width="1" height="1" fill="#fff"/><rect x="2" y="0" width="1" height="1" fill="#fff"/><rect x="2" y="2" width="1" height="1" fill="#fff"/><rect x="2" y="4" width="1" height="1" fill="#fff"/><rect x="2" y="6" width="1" height="1" fill="#fff"/><rect x="4" y="0" width="1" height="1" fill="#fff"/><rect x="4" y="2" width="1" height="1" fill="#fff"/><rect x="4" y="4" width="1" height="1" fill="#fff"/><rect x="4" y="6" width="1" height="1" fill="#fff"/><rect x="6" y="0" width="1" height="1" fill="#fff"/><rect x="6" y="2" width="1" height="1" fill="#fff"/><rect x="6" y="4" width="1" height="1" fill="#fff"/><rect x="6" y="6" width="1" height="1" fill="#fff"/></svg>
<div style="left:67px;top:769px;width:75px;height:15px;background:#cdcdcd;"></div>
<svg style="left:54px;top:771px;" width="8" height="10" viewBox="0 0 8 10"><path d="M6 1 L2 5 L6 9" fill="none" stroke="#444" stroke-width="2"/></svg>
<svg style="left:517px;top:771px;" width="8" height="10" viewBox="0 0 8 10"><path d="M2 1 L6 5 L2 9" fill="none" stroke="#444" stroke-width="2"/></svg>
<div style="left:530px;top:134px;width:1px;height:380px;background:#8f9092;"></div>
<div style="left:530px;top:519px;width:1px;height:266px;background:#8f9092;"></div>
<div style="left:531px;top:134px;width:6px;height:651px;background:#fff;"></div>
<div style="left:536px;top:134px;width:2px;height:380px;background:#8f9092;"></div>
<div style="left:536px;top:519px;width:2px;height:266px;background:#8f9092;"></div>
<div style="left:538px;top:134px;width:699px;height:22px;background:#9fa2a5;"></div>
<div style="left:538px;top:134px;width:699px;height:1px;background:#8f9092;"></div>
<div style="left:538px;top:155px;width:699px;height:1px;background:#fff;"></div>
<div style="left:538px;top:156px;width:699px;height:19px;background:#c9cacc;"></div>
<div style="left:538px;top:175px;width:699px;height:1px;background:#8f9092;"></div>
<div style="left:538px;top:176px;width:699px;height:17px;background:#c9cacc;"></div>
<div style="left:538px;top:193px;width:699px;height:1px;background:#8f9092;"></div>
<div style="left:563px;top:135px;width:1px;height:20px;background:#fff;"></div>
<div style="left:884px;top:135px;width:1px;height:20px;background:#fff;"></div>
<div style="left:1216px;top:135px;width:1px;height:20px;background:#fff;"></div>
<div style="left:595px;top:156px;width:1px;height:19px;background:#fff;"></div>
<div style="left:670px;top:156px;width:1px;height:19px;background:#fff;"></div>
<div style="left:745px;top:156px;width:1px;height:19px;background:#fff;"></div>
<div style="left:820px;top:156px;width:1px;height:19px;background:#fff;"></div>
<div style="left:895px;top:156px;width:1px;height:19px;background:#fff;"></div>
<div style="left:970px;top:156px;width:1px;height:19px;background:#fff;"></div>
<div style="left:1044px;top:156px;width:1px;height:19px;background:#fff;"></div>
<div style="left:1119px;top:156px;width:1px;height:19px;background:#fff;"></div>
<div style="left:1194px;top:156px;width:1px;height:19px;background:#fff;"></div>
<div class="t" style="left:563px;top:138px;width:321px;text-align:center;">Nov 2024</div>
<div class="t" style="left:884px;top:138px;width:333px;text-align:center;">Dez 2024</div>
<div class="t" style="left:543px;top:158px;letter-spacing:-0.35px;">KW44</div>
<div class="t" style="left:595px;top:158px;width:75px;text-align:center;letter-spacing:-0.35px;">KW45</div>
<div class="t" style="left:670px;top:158px;width:75px;text-align:center;letter-spacing:-0.35px;">KW46</div>
<div class="t" style="left:745px;top:158px;width:75px;text-align:center;letter-spacing:-0.35px;">KW47</div>
<div class="t" style="left:820px;top:158px;width:75px;text-align:center;letter-spacing:-0.35px;">KW48</div>
<div class="t" style="left:895px;top:158px;width:75px;text-align:center;letter-spacing:-0.35px;">KW49</div>
<div class="t" style="left:970px;top:158px;width:74px;text-align:center;letter-spacing:-0.35px;">KW50</div>
<div class="t" style="left:1044px;top:158px;width:75px;text-align:center;letter-spacing:-0.35px;">KW51</div>
<div class="t" style="left:1119px;top:158px;width:75px;text-align:center;letter-spacing:-0.35px;">KW52</div>
<div style="left:1194px;top:158px;width:43px;height:14px;overflow:hidden;"><div class="t" style="left:25px;top:0;">KW1</div></div>
<div style="left:538px;top:194px;width:699px;height:319px;background:#fff;"></div>
<div style="left:538px;top:273px;width:699px;height:19px;background:#ffffb0;"></div>
<div style="left:538px;top:293px;width:699px;height:19px;background:#bff7e8;border-top:1px solid #1db9a3;border-bottom:1px solid #1db9a3;"></div>
<div style="left:538px;top:212px;width:699px;height:1px;background:#c6c6c6;"></div>
<div style="left:538px;top:232px;width:699px;height:1px;background:#c6c6c6;"></div>
<div style="left:538px;top:252px;width:699px;height:1px;background:#c6c6c6;"></div>
<div style="left:538px;top:272px;width:699px;height:1px;background:#c6c6c6;"></div>
<div style="left:538px;top:292px;width:699px;height:1px;background:#c6c6c6;"></div>
<div style="left:538px;top:312px;width:699px;height:1px;background:#c6c6c6;"></div>
<div style="left:538px;top:332px;width:699px;height:1px;background:#c6c6c6;"></div>
<div style="left:538px;top:352px;width:699px;height:1px;background:#c6c6c6;"></div>
<div style="left:538px;top:372px;width:699px;height:1px;background:#c6c6c6;"></div>
<div style="left:538px;top:392px;width:699px;height:1px;background:#c6c6c6;"></div>
<div style="left:538px;top:412px;width:699px;height:1px;background:#c6c6c6;"></div>
<div style="left:538px;top:432px;width:699px;height:1px;background:#c6c6c6;"></div>
<div style="left:538px;top:452px;width:699px;height:1px;background:#c6c6c6;"></div>
<div style="left:538px;top:472px;width:699px;height:1px;background:#c6c6c6;"></div>
<div style="left:538px;top:492px;width:699px;height:1px;background:#c6c6c6;"></div>
<div style="left:538px;top:512px;width:699px;height:1px;background:#c6c6c6;"></div>
<div style="left:595px;top:194px;width:1px;height:319px;background:#c6c6c6;"></div>
<div style="left:670px;top:194px;width:1px;height:319px;background:#c6c6c6;"></div>
<div style="left:745px;top:194px;width:1px;height:319px;background:#c6c6c6;"></div>
<div style="left:820px;top:194px;width:1px;height:319px;background:#c6c6c6;"></div>
<div style="left:895px;top:194px;width:1px;height:319px;background:#c6c6c6;"></div>
<div style="left:970px;top:194px;width:1px;height:319px;background:#c6c6c6;"></div>
<div style="left:1044px;top:194px;width:1px;height:319px;background:#c6c6c6;"></div>
<div style="left:1119px;top:194px;width:1px;height:319px;background:#c6c6c6;"></div>
<div style="left:1194px;top:194px;width:1px;height:319px;background:#c6c6c6;"></div>
<div style="left:1142px;top:194px;width:11px;height:319px;background:rgba(255,236,150,0.45);"></div>
<div class="bar" style="left:613px;top:195px;width:62px;background:#5f8a1e;border:1px solid #000;padding-left:3.5px;line-height:14px;">MILLING</div>
<div class="bar" style="left:711px;top:195px;width:62px;background:#5f8a1e;border:1px solid #000;padding-left:3.5px;line-height:14px;">CNCPROCESSING</div>
<div class="bar" style="left:773px;top:195px;width:62px;background:#5f8a1e;border:1px solid #000;padding-left:3.5px;line-height:14px;">QPREFAB</div>
<div class="bar" style="left:613px;top:215px;width:21px;background:#5f8a1e;border:1px solid #000;padding-left:3.5px;line-height:14px;">MILLING</div>
<div class="bar" style="left:677px;top:215px;width:40px;background:#5f8a1e;border:1px solid #000;padding-left:3.5px;line-height:14px;">CNCPROCESSING</div>
<div class="bar" style="left:717px;top:215px;width:38px;background:#5f8a1e;border:1px solid #000;padding-left:3.5px;line-height:14px;">QPREFAB</div>
<div class="bar" style="left:631px;top:235px;width:44px;background:#5f8a1e;border:1px solid #000;padding-left:3.5px;line-height:14px;">SAWING</div>
<div class="bar" style="left:677px;top:235px;width:12px;background:#5f8a1e;border:1px solid #000;padding-left:3.5px;line-height:14px;">MILLING</div>
<div class="bar" style="left:723px;top:235px;width:32px;background:#5f8a1e;border:1px solid #000;padding-left:3.5px;line-height:14px;">CNCPROCESSING</div>
<div class="bar" style="left:755px;top:235px;width:15px;background:#5f8a1e;border:1px solid #000;padding-left:3.5px;line-height:14px;">QPREFAB</div>
<div class="bar" style="left:635px;top:255px;width:162px;background:#a08a0c;border:1px solid #000;padding-left:3.5px;line-height:14px;"></div>
<div class="bar" style="left:635px;top:255px;width:89px;background:#5f8a1e;border:1px solid #000;padding-left:3.5px;line-height:14px;border-right:1px dotted #fff;">CNCPROCESSING</div>
<div class="bar" style="left:835px;top:255px;width:22px;background:#5f8a1e;border:1px solid #000;padding-left:3.5px;line-height:14px;">QPREFAB</div>
<div class="bar" style="left:641px;top:275px;width:54px;background:#84c32f;border:2px solid #ff1010;padding-left:2.5px;line-height:12px;box-shadow:inset 0 0 0 1px rgba(0,0,0,.3);">ASSEMBLY</div>
<div class="bar" style="left:695px;top:275px;width:54px;background:#84c32f;border:2px solid #0a0aff;padding-left:2.5px;line-height:12px;box-shadow:inset 0 0 0 1px rgba(0,0,0,.3);">QASSEMBLY</div>
<div class="bar" style="left:749px;top:275px;width:15px;background:#84c32f;border:2px solid #0a0aff;padding-left:2.5px;line-height:12px;box-shadow:inset 0 0 0 1px rgba(0,0,0,.3);">SHIPPING</div>
<div class="bar" style="left:641px;top:295px;width:54px;background:#84c32f;border:2px solid #ff1010;padding-left:2.5px;line-height:12px;box-shadow:inset 0 0 0 1px rgba(0,0,0,.3);">ASSEMBLY</div>
<div class="bar" style="left:695px;top:315px;width:54px;background:#84c32f;border:2px solid #0a0aff;padding-left:2.5px;line-height:12px;box-shadow:inset 0 0 0 1px rgba(0,0,0,.3);">QASSEMBLY</div>
<div class="bar" style="left:749px;top:335px;width:15px;background:#84c32f;border:2px solid #0a0aff;padding-left:2.5px;line-height:12px;box-shadow:inset 0 0 0 1px rgba(0,0,0,.3);">SHIPPING</div>
<div class="bar" style="left:675px;top:355px;width:43px;background:#5f8a1e;border:1px solid #000;padding-left:3.5px;line-height:14px;">SAWING</div>
<div class="bar" style="left:718px;top:355px;width:44px;background:#5f8a1e;border:1px solid #000;padding-left:3.5px;line-height:14px;">MILLING</div>
<div class="bar" style="left:773px;top:355px;width:23px;background:#5f8a1e;border:1px solid #000;padding-left:3.5px;line-height:14px;">CNCPROCESSING</div>
<div class="bar" style="left:847px;top:355px;width:22px;background:#5f8a1e;border:1px solid #000;padding-left:3.5px;line-height:14px;">QPREFAB</div>
<div class="bar" style="left:675px;top:375px;width:23px;background:#5f8a1e;border:1px solid #000;padding-left:3.5px;line-height:14px;">ASSEMBLY</div>
<div class="bar" style="left:698px;top:375px;width:53px;background:#5f8a1e;border:1px solid #000;padding-left:3.5px;line-height:14px;">QASSEMBLY</div>
<div class="bar" style="left:751px;top:375px;width:12px;background:#5f8a1e;border:1px solid #000;padding-left:3.5px;line-height:14px;">SHIPPING</div>
<div class="bar" style="left:675px;top:395px;width:11px;background:#5f8a1e;border:1px solid #000;padding-left:3.5px;line-height:14px;">MILLING</div>
<div class="bar" style="left:717px;top:395px;width:55px;background:#5f8a1e;border:1px solid #000;padding-left:3.5px;line-height:14px;">CNCPROCESSING</div>
<div class="bar" style="left:772px;top:395px;width:11px;background:#5f8a1e;border:1px solid #000;padding-left:3.5px;line-height:14px;">QPREFAB</div>
<div class="bar" style="left:686px;top:415px;width:34px;background:#5f8a1e;border:1px solid #000;padding-left:3.5px;line-height:14px;">MILLING</div>
<div class="bar" style="left:755px;top:415px;width:37px;background:#5f8a1e;border:1px solid #000;padding-left:3.5px;line-height:14px;box-shadow:inset 2px 0 0 #c8761a,inset 3px 0 0 #f4ead8;padding-left:5px;">CNCPROCESSING</div>
<div class="bar" style="left:792px;top:415px;width:55px;background:#5f8a1e;border:1px solid #000;padding-left:3.5px;line-height:14px;">QPREFAB</div>
<div class="bar" style="left:696px;top:435px;width:23px;background:#84c32f;border:1px solid #000;padding-left:3.5px;line-height:14px;">ASSEMBLY</div>
<div class="bar" style="left:751px;top:435px;width:30px;background:#84c32f;border:1px solid #000;padding-left:3.5px;line-height:14px;">QASSEMBLY</div>
<div class="bar" style="left:781px;top:435px;width:13px;background:#84c32f;border:1px solid #000;padding-left:3.5px;line-height:14px;">SHIPPING</div>
<div class="bar" style="left:716px;top:455px;width:33px;background:#84c32f;border:1px solid #000;padding-left:3.5px;line-height:14px;">ASSEMBLY</div>
<div class="bar" style="left:749px;top:455px;width:12px;background:#84c32f;border:1px solid #000;padding-left:3.5px;line-height:14px;">QASSEMBLY</div>
<div class="bar" style="left:760px;top:455px;width:4px;background:#84c32f;border:1px solid #000;padding-left:3.5px;line-height:14px;padding:0;"></div>
<div class="bar" style="left:718px;top:475px;width:33px;background:#5f8a1e;border:1px solid #000;padding-left:3.5px;line-height:14px;">SAWING</div>
<div class="bar" style="left:762px;top:475px;width:4px;background:#5f8a1e;border:1px solid #000;padding-left:3.5px;line-height:14px;padding:0;"></div>
<div class="bar" style="left:772px;top:475px;width:4px;background:#5f8a1e;border:1px solid #000;padding-left:3.5px;line-height:14px;padding:0;"></div>
<div class="bar" style="left:783px;top:475px;width:4px;background:#5f8a1e;border:1px solid #000;padding-left:3.5px;line-height:14px;padding:0;"></div>
<div class="bar" style="left:751px;top:495px;width:30px;background:#84c32f;border:1px solid #000;padding-left:3.5px;line-height:14px;">SAWING</div>
<div class="bar" style="left:781px;top:495px;width:15px;background:#84c32f;border:1px solid #000;padding-left:3.5px;line-height:14px;">MILLING</div>
<div class="bar" style="left:796px;top:495px;width:40px;background:#84c32f;border:1px solid #000;padding-left:3.5px;line-height:14px;">CNCPROCESSING</div>
<div class="bar" style="left:857px;top:495px;width:15px;background:#84c32f;border:1px solid #000;padding-left:3.5px;line-height:14px;">QPREFAB</div>
<div style="left:538px;top:512px;width:699px;height:2px;background:#a3a3a3;"></div>
<div style="left:538px;top:519px;width:699px;height:2px;background:#a3a3a3;"></div>
<div style="left:538px;top:521px;width:699px;height:247px;background:#fff;"></div>
<div style="left:538px;top:540px;width:699px;height:1px;background:#c6c6c6;"></div>
<div style="left:538px;top:560px;width:699px;height:1px;background:#c6c6c6;"></div>
<div style="left:538px;top:580px;width:699px;height:1px;background:#c6c6c6;"></div>
<div style="left:538px;top:600px;width:699px;height:1px;background:#c6c6c6;"></div>
<div style="left:538px;top:620px;width:699px;height:1px;background:#c6c6c6;"></div>
<div style="left:538px;top:640px;width:699px;height:1px;background:#c6c6c6;"></div>
<div style="left:538px;top:660px;width:699px;height:1px;background:#c6c6c6;"></div>
<div style="left:538px;top:680px;width:699px;height:1px;background:#c6c6c6;"></div>
<div style="left:538px;top:700px;width:699px;height:1px;background:#c6c6c6;"></div>
<div style="left:538px;top:720px;width:699px;height:1px;background:#c6c6c6;"></div>
<div style="left:538px;top:740px;width:699px;height:1px;background:#c6c6c6;"></div>
<div style="left:538px;top:760px;width:699px;height:1px;background:#c6c6c6;"></div>
<div style="left:595px;top:521px;width:1px;height:247px;background:#c6c6c6;"></div>
<div style="left:670px;top:521px;width:1px;height:247px;background:#c6c6c6;"></div>
<div style="left:745px;top:521px;width:1px;height:247px;background:#c6c6c6;"></div>
<div style="left:820px;top:521px;width:1px;height:247px;background:#c6c6c6;"></div>
<div style="left:895px;top:521px;width:1px;height:247px;background:#c6c6c6;"></div>
<div style="left:970px;top:521px;width:1px;height:247px;background:#c6c6c6;"></div>
<div style="left:1044px;top:521px;width:1px;height:247px;background:#c6c6c6;"></div>
<div style="left:1119px;top:521px;width:1px;height:247px;background:#c6c6c6;"></div>
<div style="left:1194px;top:521px;width:1px;height:247px;background:#c6c6c6;"></div>
<div style="left:1142px;top:521px;width:11px;height:247px;background:rgba(255,236,150,0.45);"></div>
<div class="bar" style="left:538px;top:523px;width:29px;background:#5f8a1e;border:1px solid #000;padding-left:3.5px;line-height:14px;border-left:none;"></div>
<div class="bar" style="left:641px;top:523px;width:54px;background:#84c32f;border:2px solid #ff1010;padding-left:2.5px;line-height:12px;"></div>
<div class="bar" style="left:696px;top:523px;width:23px;background:#84c32f;border:1px solid #000;padding-left:3.5px;line-height:14px;"></div>
<div class="bar" style="left:770px;top:523px;width:65px;background:#5f8a1e;border:1px solid #000;padding-left:3.5px;line-height:14px;"></div>
<div class="bar" style="left:835px;top:523px;width:24px;background:#84c32f;border:1px solid #000;padding-left:3.5px;line-height:14px;"></div>
<div class="bar" style="left:869px;top:523px;width:54px;background:#84c32f;border:1px solid #000;padding-left:3.5px;line-height:14px;"></div>
<div class="bar" style="left:1051px;top:523px;width:72px;background:#84c32f;border:1px solid #000;padding-left:3.5px;line-height:14px;"></div>
<div class="bar" style="left:1126px;top:523px;width:76px;background:#84c32f;border:1px solid #000;padding-left:3.5px;line-height:14px;"></div>
<div class="bar" style="left:538px;top:543px;width:29px;background:#5f8a1e;border:1px solid #000;padding-left:3.5px;line-height:14px;border-left:none;"></div>
<div class="bar" style="left:567px;top:543px;width:45px;background:#5f8a1e;border:1px solid #000;padding-left:3.5px;line-height:14px;"></div>
<div class="bar" style="left:675px;top:543px;width:23px;background:#5f8a1e;border:1px solid #000;padding-left:3.5px;line-height:14px;"></div>
<div class="bar" style="left:716px;top:543px;width:33px;background:#84c32f;border:1px solid #000;padding-left:3.5px;line-height:14px;"></div>
<div class="bar" style="left:857px;top:543px;width:65px;background:#84c32f;border:1px solid #000;padding-left:3.5px;line-height:14px;"></div>
<div class="bar" style="left:922px;top:543px;width:52px;background:#84c32f;border:1px solid #000;padding-left:3.5px;line-height:14px;"></div>
<div class="bar" style="left:1060px;top:543px;width:33px;background:#84c32f;border:1px solid #000;padding-left:3.5px;line-height:14px;"></div>
<div class="bar" style="left:869px;top:563px;width:65px;background:#84c32f;border:1px solid #000;padding-left:3.5px;line-height:14px;"></div>
<div style="left:538px;top:583px;width:699px;height:15px;border-top:1px solid #000;border-bottom:1px solid #000;"></div>
<div style="left:538px;top:584px;width:29px;height:13px;background:#21a66e;"></div>
<div style="left:567px;top:584px;width:56px;height:13px;background:#ecc70d;"></div>
<div style="left:623px;top:584px;width:20px;height:13px;background:#21a66e;"></div>
<div style="left:695px;top:584px;width:3px;height:13px;background:#21a66e;"></div>
<div style="left:698px;top:584px;width:62px;height:13px;background:#ecc70d;"></div>
<div style="left:760px;top:584px;width:21px;height:13px;background:#21a66e;"></div>
<div style="left:835px;top:584px;width:24px;height:13px;background:#21a66e;"></div>
<div style="left:859px;top:584px;width:41px;height:13px;background:#ecc70d;"></div>
<div style="left:900px;top:584px;width:11px;height:13px;background:#21a66e;"></div>
<div style="left:923px;top:584px;width:54px;height:13px;background:#ecc70d;"></div>
<div style="left:977px;top:584px;width:7px;height:13px;background:#21a66e;"></div>
<div style="left:984px;top:584px;width:3px;height:13px;background:#ecc70d;"></div>
<div style="left:987px;top:584px;width:62px;height:13px;background:#21a66e;"></div>
<div style="left:1080px;top:584px;width:13px;height:13px;background:#21a66e;"></div>
<div style="left:1093px;top:584px;width:64px;height:13px;background:#ecc70d;"></div>
<div style="left:1157px;top:584px;width:44px;height:13px;background:#21a66e;"></div>
<div style="left:1202px;top:584px;width:35px;height:13px;background:#21a66e;"></div>
<div style="left:599px;top:603px;width:638px;height:15px;border:1px solid #000;border-right:none;"></div>
<div style="left:600px;top:604px;width:12px;height:13px;background:#ecc70d;"></div>
<div style="left:612px;top:604px;width:4px;height:13px;background:#d02634;"></div>
<div style="left:616px;top:604px;width:7px;height:13px;background:#ecc70d;"></div>
<div style="left:623px;top:604px;width:2px;height:13px;background:#d02634;"></div>
<div style="left:625px;top:604px;width:11px;height:13px;background:#ecc70d;"></div>
<div style="left:643px;top:604px;width:34px;height:13px;background:#ecc70d;"></div>
<div style="left:749px;top:604px;width:2px;height:13px;background:#ecc70d;"></div>
<div style="left:751px;top:604px;width:13px;height:13px;background:#d02634;"></div>
<div style="left:781px;top:604px;width:13px;height:13px;background:#ecc70d;"></div>
<div style="left:900px;top:604px;width:11px;height:13px;background:#ecc70d;"></div>
<div style="left:911px;top:604px;width:11px;height:13px;background:#d02634;"></div>
<div style="left:977px;top:604px;width:10px;height:13px;background:#ecc70d;"></div>
<div style="left:987px;top:604px;width:8px;height:13px;background:#d02634;"></div>
<div style="left:995px;top:604px;width:14px;height:13px;background:#ecc70d;"></div>
<div style="left:1049px;top:604px;width:22px;height:13px;background:#ecc70d;"></div>
<div style="left:1125px;top:604px;width:13px;height:13px;background:#ecc70d;"></div>
<div style="left:1157px;top:604px;width:15px;height:13px;background:#ecc70d;"></div>
<div style="left:1201px;top:604px;width:22px;height:13px;background:#ecc70d;"></div>
<div style="left:1236px;top:134px;width:17px;height:651px;background:#f0f0f0;"></div>
<div class="btn" style="left:1236px;top:135px;width:17px;height:17px;"><svg style="left:-1px;top:-1px" width="17" height="16" viewBox="0 0 17 16"><path d="M7.4 4.4 H9.6 V7 H12.2 V9.2 H9.6 V11.8 H7.4 V9.2 H4.8 V7 H7.4 Z" fill="#000"/></svg></div>
<div class="btn" style="left:1236px;top:152px;width:17px;height:17px;"><svg style="left:-1px;top:-1px" width="17" height="16" viewBox="0 0 17 16"><rect x="5" y="7" width="7" height="2.4" fill="#000"/></svg></div>
<div class="btn" style="left:1236px;top:169px;width:17px;height:17px;"><svg style="left:-1px;top:-1px" width="17" height="16" viewBox="0 0 17 16"><circle cx="8.5" cy="8.2" r="3.4" fill="#000"/></svg></div>
<div class="btn" style="left:1236px;top:186px;width:17px;height:17px;"><svg style="left:-1px;top:-1px" width="17" height="16" viewBox="0 0 17 16"><path d="M4.6 5.4 H12.6 V11.6 L8.6 8.4 L4.6 11.6 Z" fill="#000"/></svg></div>
<div class="btn" style="left:1236px;top:203px;width:17px;height:17px;"><svg style="left:-1px;top:-1px" width="17" height="16" viewBox="0 0 17 16"><path d="M4.4 4.4 H12.6 L9.6 7.6 V12 H7.4 V7.6 Z" fill="#000"/></svg></div>
<div class="btn" style="left:1236px;top:220px;width:17px;height:17px;"><svg style="left:-1px;top:-1px" width="17" height="16" viewBox="0 0 17 16"><path d="M4.8 4.6 H12.4 L8.6 8.6 Z" fill="#000"/><rect x="4.8" y="10" width="7.6" height="1.8" fill="#000"/></svg></div>
<div class="btn" style="left:1236px;top:238px;width:17px;height:17px;"><svg style="left:-1px;top:-1px" width="17" height="16" viewBox="0 0 17 16"><path d="M7.8 4.4 V12 L3.8 8.2 Z M9.4 4.4 V12 L13.4 8.2 Z" fill="#000"/></svg></div>
<div class="btn" style="left:1236px;top:255px;width:17px;height:17px;"><svg style="left:-1px;top:-1px" width="17" height="16" viewBox="0 0 17 16"><path d="M11 3.6 V12.8 L5.4 8.2 Z" fill="#000"/></svg></div>
<div class="btn" style="left:1236px;top:272px;width:17px;height:17px;"><svg style="left:-1px;top:-1px" width="17" height="16" viewBox="0 0 17 16"><path d="M6.2 3.6 V12.8 L11.8 8.2 Z" fill="#000"/></svg></div>
<svg style="left:1240px;top:292px;" width="10" height="9" viewBox="0 0 10 9"><path d="M1.2 6.6 L5 2.8 L8.8 6.6" fill="none" stroke="#5a5a5a" stroke-width="2"/></svg>
<div style="left:1237px;top:377px;width:15px;height:54px;background:#cdcdcd;"></div>
<svg style="left:1240px;top:500px;" width="10" height="9" viewBox="0 0 10 9"><path d="M1.2 2.4 L5 6.2 L8.8 2.4" fill="none" stroke="#5a5a5a" stroke-width="2"/></svg>
<div style="left:1237px;top:512px;width:16px;height:9px;background:#fff;"></div>
<div style="left:1237px;top:512px;width:16px;height:2px;background:#a3a3a3;"></div>
<div style="left:1237px;top:519px;width:16px;height:2px;background:#a3a3a3;"></div>
<div class="btn" style="left:1236px;top:522px;width:17px;height:17px;"><svg style="left:-1px;top:-1px" width="17" height="16" viewBox="0 0 17 16"><path d="M7.8 4.4 V12 L3.8 8.2 Z M9.4 4.4 V12 L13.4 8.2 Z" fill="#000"/></svg></div>
<div class="btn" style="left:1236px;top:539px;width:17px;height:17px;"><svg style="left:-1px;top:-1px" width="17" height="16" viewBox="0 0 17 16"><path d="M11 3.6 V12.8 L5.4 8.2 Z" fill="#000"/></svg></div>
<div class="btn" style="left:1236px;top:556px;width:17px;height:17px;"><svg style="left:-1px;top:-1px" width="17" height="16" viewBox="0 0 17 16"><path d="M6.2 3.6 V12.8 L11.8 8.2 Z" fill="#000"/></svg></div>
<svg style="left:1240px;top:576px;" width="10" height="9" viewBox="0 0 10 9"><path d="M1.2 6.6 L5 2.8 L8.8 6.6" fill="none" stroke="#5a5a5a" stroke-width="2"/></svg>
<svg style="left:1240px;top:755px;" width="10" height="9" viewBox="0 0 10 9"><path d="M1.2 2.4 L5 6.2 L8.8 2.4" fill="none" stroke="#5a5a5a" stroke-width="2"/></svg>
<div style="left:538px;top:768px;width:715px;height:17px;background:#f0f0f0;"></div>
<div class="btn" style="left:538px;top:768px;width:15px;height:16px;"><svg style="left:0;top:0" width="14" height="14" viewBox="0 0 14 14"><path d="M3 3.6 H11 M3 6.8 H11 M3 10 H11" stroke="#000" stroke-width="1.6"/></svg></div>
<div class="btn" style="left:554px;top:768px;width:16px;height:16px;"><svg style="left:0;top:0" width="14" height="14" viewBox="0 0 14 14"><rect x="3" y="2.6" width="8.4" height="8.4" fill="#000"/></svg></div>
<svg style="left:577px;top:771px;" width="8" height="10" viewBox="0 0 8 10"><path d="M6 1 L2 5 L6 9" fill="none" stroke="#444" stroke-width="2"/></svg>
<div style="left:1078px;top:769px;width:19px;height:15px;background:#cdcdcd;"></div>
<svg style="left:1225px;top:771px;" width="8" height="10" viewBox="0 0 8 10"><path d="M2 1 L6 5 L2 9" fill="none" stroke="#444" stroke-width="2"/></svg>
<div style="left:1237px;top:768px;width:15px;height:16px;background:#fff;"><svg style="left:0;top:0" width="15" height="16" viewBox="0 0 15 16"><path d="M2 3.6 H13 V5 H2 Z M2 12.6 L7.5 6.2 L13 12.6 V10.6 L7.5 9.2 L2 10.6 Z" fill="#000"/><path d="M2 12.8 V8.6 L7.5 5.8 L13 8.6 V12.8 L7.5 10 Z" fill="#000"/></svg></div>
<div style="left:0px;top:785px;width:1255px;height:5px;background:#e9e6da;"></div>
<div style="left:0px;top:785px;width:1255px;height:1px;background:#9b9b98;"></div>
<div style="left:0px;top:790px;width:1255px;height:16px;background:#121f33;"></div>
<div style="left:0px;top:806px;width:1255px;height:3px;background:#efece2;"></div>
<div style="left:0px;top:809px;width:1255px;height:1px;background:#121f33;"></div>
<svg style="left:570px;top:790px;" width="16" height="16" viewBox="0 0 16 16"><path d="M1.4 7 Q7 0.8 12.6 7 Q7 13 1.4 7 Z" fill="#fff"/><circle cx="7" cy="7" r="2.2" fill="#121f33"/><circle cx="7" cy="7" r="1" fill="#fff"/><rect x="9.4" y="8.8" width="5" height="5.6" fill="#121f33" stroke="#fff" stroke-width="0.9"/><path d="M10.8 8.8 V14 M12.6 8.8 V14" stroke="#fff" stroke-width="0.7"/></svg>
<div class="t" style="left:587px;top:792px;color:#fff;letter-spacing:0.1px;">05.12.24 15:07</div>
<div class="t" style="left:684px;top:792px;color:#f2cf1d;letter-spacing:-0.32px;">Demo license!</div>
<div class="t" style="left:772px;top:792px;color:#fff;letter-spacing:-0.18px;">Simulation&nbsp; 20241029091619</div>
<div class="t" style="left:932px;top:792px;color:#fff;letter-spacing:-0.01px;">jenny.schulung.alltrotec.de / sim2101schul-2</div>
<div class="t" style="left:1169px;top:792px;color:#fff;letter-spacing:0px;">Zeilen: 56/5</div>
<div style="left:674px;top:791px;width:2px;height:15px;background:#d8d8d8;"></div>
<div style="left:761px;top:791px;width:2px;height:15px;background:#d8d8d8;"></div>
<div style="left:921px;top:791px;width:2px;height:15px;background:#d8d8d8;"></div>
<div style="left:1160px;top:791px;width:2px;height:15px;background:#d8d8d8;"></div>
<svg style="left:1241px;top:796px;" width="12" height="10" viewBox="0 0 12 10"><rect x="9" y="1" width="1.4" height="1.4" fill="#cfd3d8"/><rect x="6" y="4" width="1.4" height="1.4" fill="#cfd3d8"/><rect x="9" y="4" width="1.4" height="1.4" fill="#cfd3d8"/><rect x="3" y="7" width="1.4" height="1.4" fill="#cfd3d8"/><rect x="6" y="7" width="1.4" height="1.4" fill="#cfd3d8"/><rect x="9" y="7" width="1.4" height="1.4" fill="#cfd3d8"/></svg>
<div style="left:0px;top:0px;width:1255px;height:1px;background:#2b3a55;"></div>
<div style="left:0px;top:0px;width:1px;height:50px;background:#4a78b8;"></div>
<div style="left:0px;top:50px;width:1px;height:760px;background:#121f33;"></div>
<div style="left:1px;top:134px;width:1px;height:651px;background:#5a6270;"></div>
<div style="left:1253px;top:134px;width:1px;height:651px;background:#8f9092;"></div>
<div style="left:1254px;top:50px;width:1px;height:760px;background:#121f33;"></div>
<div style="left:1254px;top:0px;width:1px;height:50px;background:#2b3a55;"></div>
</body></html>
